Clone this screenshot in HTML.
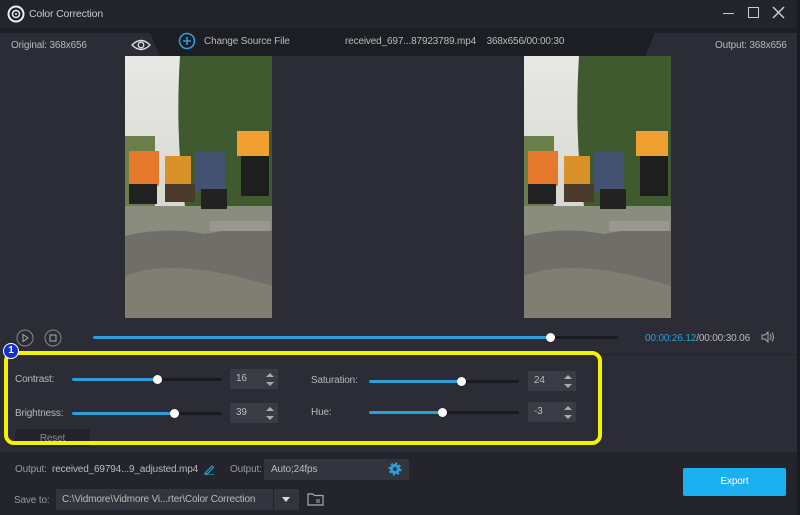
<!DOCTYPE html>
<html><head><meta charset="utf-8"><style>
*{margin:0;padding:0;box-sizing:border-box}
body{width:800px;height:515px;background:#2b2c35;font-family:"Liberation Sans",sans-serif;font-size:10px;letter-spacing:-0.15px;color:#b8b9be;position:relative;overflow:hidden}
.a{position:absolute}
.title{left:0;top:0;width:800px;height:28px;background:#24252c}
.hdr{left:0;top:28px;width:800px;height:28px;background:#1d1e23}
.t{white-space:nowrap}
.track{height:3px;background:#1a1b20;border-radius:2px}
.fill{height:3px;background:#2a9fd8;border-radius:2px}
.knob{width:9px;height:9px;border-radius:50%;background:#fff}
.num{background:#3a3b44;width:48px;height:20px;color:#bbb;padding:4px 0 0 6px}
.arr{right:6px;width:0;height:0;border-left:4px solid transparent;border-right:4px solid transparent}
</style></head><body>
<div class="a title"></div>
<svg class="a" style="left:7px;top:5px" width="18" height="18" viewBox="0 0 18 18"><circle cx="9" cy="9" r="7.5" fill="none" stroke="#eee" stroke-width="2"/><circle cx="9" cy="9" r="3.5" fill="none" stroke="#eee" stroke-width="1.5"/><circle cx="9" cy="9" r="1" fill="#eee"/></svg>
<div class="a t" style="left:29px;top:8px;color:#c8c9cc;font-size:10.5px">Color Correction</div>
<div class="a" style="left:723px;top:13px;width:11px;height:1px;background:#ccc"></div>
<div class="a" style="left:748px;top:7px;width:11px;height:11px;border:1.5px solid #ccc"></div>
<svg class="a" style="left:772px;top:6px" width="13" height="13"><path d="M1 1L12 12M12 1L1 12" stroke="#ccc" stroke-width="1.5"/></svg>
<div class="a hdr"></div>
<div class="a" style="left:0;top:33px;width:160px;height:23px;background:#2b2c35;clip-path:polygon(0 0,150px 0,160px 23px,0 23px)"></div>
<div class="a" style="left:645px;top:33px;width:155px;height:23px;background:#2b2c35;clip-path:polygon(10px 0,155px 0,155px 23px,0 23px)"></div>
<div class="a t" style="left:11px;top:40px">Original: 368x656</div>
<svg class="a" style="left:131px;top:39px" width="20" height="12"><path d="M1 6Q10-3 19 6Q10 15 1 6Z" fill="none" stroke="#ddd" stroke-width="1.3"/><circle cx="10" cy="6" r="2.8" fill="none" stroke="#ddd" stroke-width="1.3"/></svg>
<svg class="a" style="left:178px;top:32px" width="18" height="18"><circle cx="9" cy="9" r="7.5" fill="none" stroke="#2a9fd8" stroke-width="1.6"/><path d="M9 5V13M5 9H13" stroke="#2a9fd8" stroke-width="1.6"/></svg>
<div class="a t" style="left:204px;top:36px;color:#bbb">Change Source File</div>
<div class="a t" style="left:345px;top:36px;color:#bbb">received_697...87923789.mp4&nbsp;&nbsp;&nbsp; 368x656/00:00:30</div>
<div class="a t" style="left:715px;top:40px">Output: 368x656</div>

<svg width="0" height="0" style="position:absolute"><defs><linearGradient id="sky" x1="0" y1="0" x2="0" y2="1"><stop offset="0" stop-color="#e8e8e4"/><stop offset="1" stop-color="#c9ccc3"/></linearGradient>
<g id="vid"><rect width="147" height="262" fill="url(#sky)"/><path d="M55 0H147V150H60Q50 80 55 0Z" fill="#3f5a2e"/><path d="M0 80H30V150H0Z" fill="#6a7e4a"/><rect x="0" y="150" width="147" height="30" fill="#8a8d7d"/><path d="M0 180Q40 170 80 178Q120 170 147 175V262H0Z" fill="#6f6e68"/><path d="M0 220Q50 200 147 230V262H0Z" fill="#807d72"/><rect x="4" y="95" width="30" height="35" fill="#e5782a"/><rect x="4" y="128" width="28" height="20" fill="#222"/><rect x="40" y="100" width="26" height="30" fill="#d9922a"/><rect x="40" y="128" width="30" height="18" fill="#4a3a2b"/><rect x="70" y="95" width="30" height="40" fill="#425270"/><rect x="76" y="133" width="26" height="20" fill="#222"/><rect x="112" y="75" width="32" height="25" fill="#f0a030"/><rect x="116" y="100" width="28" height="40" fill="#1e1e1e"/><rect x="85" y="165" width="60" height="10" fill="#989890"/></g></defs></svg>
<svg class="a" style="left:125px;top:56px" width="147" height="262"><use href="#vid"/></svg>
<svg class="a" style="left:524px;top:56px" width="147" height="262"><use href="#vid"/></svg>

<svg class="a" style="left:16px;top:329px" width="18" height="18"><circle cx="9" cy="9" r="8" fill="none" stroke="#888" stroke-width="1"/><path d="M7 5.5L12 9L7 12.5Z" fill="none" stroke="#aaa"/></svg>
<svg class="a" style="left:44px;top:329px" width="18" height="18"><circle cx="9" cy="9" r="8" fill="none" stroke="#888" stroke-width="1"/><rect x="6" y="6" width="6" height="6" fill="none" stroke="#aaa"/></svg>
<div class="a track" style="left:93px;top:336px;width:525px"></div>
<div class="a fill" style="left:93px;top:336px;width:458px"></div>
<div class="a knob" style="left:546px;top:333px"></div>
<div class="a t" style="left:645px;top:333px;color:#bbb"><span style="color:#2a9fd8">00:00:26.12</span>/00:00:30.06</div>
<svg class="a" style="left:761px;top:331px" width="14" height="12"><path d="M1 4H4L7 1V11L4 8H1Z" fill="none" stroke="#aaa"/><path d="M9 3Q11 6 9 9M11 1.5Q14 6 11 10.5" fill="none" stroke="#aaa"/></svg>
<div class="a" style="left:600px;top:354px;width:200px;height:1px;background:#24252b"></div>

<div class="a" style="left:0;top:452px;width:800px;height:63px;background:#24252c"></div>
<div class="a" style="left:797px;top:0;width:3px;height:515px;background:#1a1b20"></div>

<div class="a" style="left:15px;top:429px;width:75px;height:18px;background:#23242a;color:#888;text-align:center;padding-top:4px">Reset</div>
<div class="a" style="left:4px;top:351px;width:598px;height:94px;border:4px solid #f5f200;border-radius:10px"></div>
<div class="a" style="left:3px;top:343px;width:16px;height:16px;border-radius:50%;background:#1530d0;border:1.5px solid #fff;color:#fff;font-weight:bold;font-size:10px;text-align:center;line-height:13px">1</div>

<div class="a t" style="left:15px;top:374px">Contrast:</div>
<div class="a track" style="left:72px;top:378px;width:150px"></div><div class="a fill" style="left:72px;top:378px;width:86px"></div><div class="a knob" style="left:153px;top:375px"></div>
<div class="a num" style="left:230px;top:369px">16</div><div class="a arr" style="left:266px;top:373px;border-bottom:4px solid #aaa"></div><div class="a arr" style="left:266px;top:382px;border-top:4px solid #aaa"></div>
<div class="a t" style="left:15px;top:408px">Brightness:</div>
<div class="a track" style="left:72px;top:412px;width:150px"></div><div class="a fill" style="left:72px;top:412px;width:102px"></div><div class="a knob" style="left:170px;top:409px"></div>
<div class="a num" style="left:230px;top:403px">39</div><div class="a arr" style="left:266px;top:407px;border-bottom:4px solid #aaa"></div><div class="a arr" style="left:266px;top:416px;border-top:4px solid #aaa"></div>
<div class="a t" style="left:311px;top:375px">Saturation:</div>
<div class="a track" style="left:369px;top:380px;width:150px"></div><div class="a fill" style="left:369px;top:380px;width:93px"></div><div class="a knob" style="left:457px;top:377px"></div>
<div class="a num" style="left:528px;top:371px">24</div><div class="a arr" style="left:564px;top:375px;border-bottom:4px solid #aaa"></div><div class="a arr" style="left:564px;top:384px;border-top:4px solid #aaa"></div>
<div class="a t" style="left:311px;top:407px">Hue:</div>
<div class="a track" style="left:369px;top:411px;width:150px"></div><div class="a fill" style="left:369px;top:411px;width:73px"></div><div class="a knob" style="left:438px;top:408px"></div>
<div class="a num" style="left:528px;top:402px">-3</div><div class="a arr" style="left:564px;top:406px;border-bottom:4px solid #aaa"></div><div class="a arr" style="left:564px;top:415px;border-top:4px solid #aaa"></div>

<div class="a t" style="left:15px;top:464px;color:#999">Output:&nbsp;&nbsp;<span style="color:#bbb">received_69794...9_adjusted.mp4</span></div>
<svg class="a" style="left:203px;top:463px" width="12" height="12"><path d="M2 10L9 3L10.5 4.5L3.5 11.5ZM1 12H11" stroke="#2a9fd8" fill="none" stroke-width="1.2"/></svg>
<div class="a t" style="left:230px;top:464px;color:#999">Output:</div>
<div class="a" style="left:264px;top:459px;width:145px;height:21px;background:#33343d;color:#bbb;padding:5px 0 0 7px">Auto;24fps</div>
<svg class="a" style="left:388px;top:462px" width="14" height="14" viewBox="0 0 14 14"><circle cx="7" cy="7" r="5" fill="#2a9fd8" stroke="#2a9fd8" stroke-width="3" stroke-dasharray="2 1.9"/><circle cx="7" cy="7" r="2" fill="#33343d"/></svg>
<div class="a t" style="left:14px;top:495px;color:#999">Save to:</div>
<div class="a" style="left:56px;top:489px;width:243px;height:21px;background:#33343d;color:#bbb;padding:5px 0 0 6px">C:\Vidmore\Vidmore Vi...rter\Color Correction</div>
<div class="a" style="left:273px;top:489px;width:1px;height:21px;background:#24252c"></div>
<div class="a arr" style="left:282px;top:497px;border-top:5px solid #ddd"></div>
<svg class="a" style="left:307px;top:492px" width="17" height="14"><path d="M1 2H6L7.5 3.5H16V13H1Z" fill="none" stroke="#aaa" stroke-width="1.2"/><path d="M9 8H13M9 10H13" stroke="#aaa"/></svg>
<div class="a" style="left:683px;top:468px;width:103px;height:28px;background:#1ab0f2;border-radius:2px;color:#fff;text-align:center;line-height:28px">Export</div>
</body></html>
